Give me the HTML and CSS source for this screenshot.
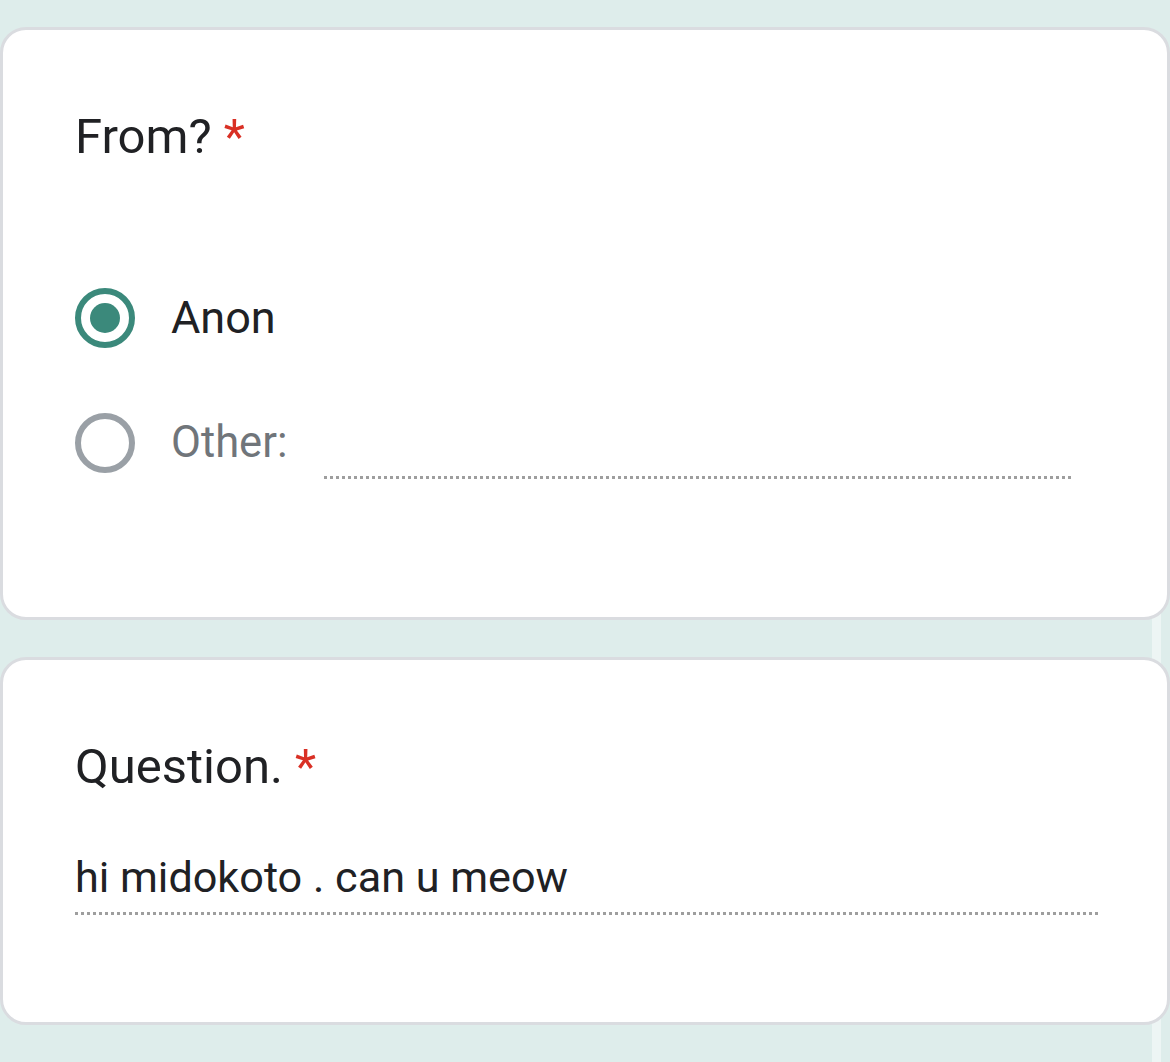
FILE: index.html
```html
<!DOCTYPE html>
<html lang="en">
<head>
<meta charset="utf-8">
<title>Form</title>
<link rel="stylesheet" href="styles.css">
</head>
<body>
<div class="track"></div>
<main class="form">
  <section class="card">
    <h2 class="q-title">From? <span class="req">*</span></h2>
    <div class="options">
      <div class="option">
        <span class="radio checked"><span class="dot"></span></span>
        <span class="opt-label">Anon</span>
      </div>
      <div class="option">
        <span class="radio"></span>
        <span class="opt-label other">Other:</span>
        <span class="other-input"></span>
      </div>
    </div>
  </section>
  <section class="card card-text">
    <h2 class="q-title">Question. <span class="req">*</span></h2>
    <div class="answer">hi midokoto . can u meow</div>
  </section>
</main>
</body>
</html>
```
FILE: styles.css
```css
html, body {
  margin: 0;
  padding: 0;
}
body {
  background: #deedeb;
  font-family: Roboto, "Liberation Sans", sans-serif;
  color: #202124;
  min-height: 1062px;
  position: relative;
}
.track {
  position: absolute;
  left: 1152px;
  width: 9px;
  top: 560px;
  bottom: 0;
  background: #edf5f4;
}
.form {
  position: relative;
  padding-top: 27px;
  display: flex;
  flex-direction: column;
  gap: 37px;
}
.card {
  background: #fff;
  border: 3px solid #dadce0;
  border-radius: 26px;
  padding: 77px 72px 144px 72px;
}
.q-title {
  margin: 0;
  font-weight: 400;
  font-size: 49px;
  line-height: 60px;
  letter-spacing: 0;
}
.req {
  color: #d93025;
}
.options {
  margin-top: 121px;
  display: flex;
  flex-direction: column;
  gap: 65px;
}
.option {
  height: 60px;
  display: flex;
  align-items: center;
}
.radio {
  box-sizing: border-box;
  width: 60px;
  height: 60px;
  flex: 0 0 60px;
  border: 6px solid #9aa0a6;
  border-radius: 50%;
  display: flex;
  align-items: center;
  justify-content: center;
}
.radio.checked {
  border-color: #3b897b;
}
.dot {
  width: 30px;
  height: 30px;
  border-radius: 50%;
  background: #3b897b;
}
.opt-label {
  margin-left: 36px;
  font-size: 45px;
  line-height: 1.172;
}
.opt-label.other {
  font-size: 43.5px;
  color: #70757a;
}
.other-input {
  flex: 0 0 748px;
  height: 72px;
  margin-left: 37px;
  background-image: repeating-linear-gradient(to right, #9e9e9e 0 3px, transparent 3px 6px);
  background-size: 100% 3px;
  background-repeat: no-repeat;
  background-position: left bottom;
}
.card-text {
  padding-bottom: 107px;
}
.answer {
  margin-top: 56px;
  margin-right: -3px;
  font-size: 43.2px;
  line-height: 50px;
  background-image: repeating-linear-gradient(to right, #9e9e9e 0 3px, transparent 3px 6px);
  background-size: 100% 3px;
  background-repeat: no-repeat;
  background-position: left bottom;
  padding-bottom: 12px;
}
```
